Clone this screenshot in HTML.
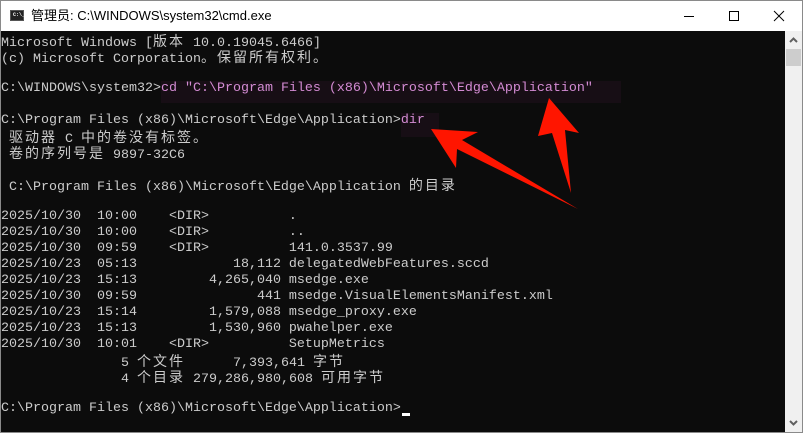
<!DOCTYPE html>
<html><head><meta charset="utf-8"><style>
html,body{margin:0;padding:0;width:803px;height:433px;overflow:hidden;background:#fff}
#win{position:absolute;left:0;top:0;width:801px;height:431px;border:1px solid #8a8a8a;background:#fff}
#title{position:absolute;left:0;top:0;width:801px;height:30px;background:#fff}
#title .t{position:absolute;left:30px;top:6px;font:13px "Liberation Sans","Noto Sans CJK SC",sans-serif;color:#000;line-height:18px}
#icon{position:absolute;left:9px;top:9px;width:14px;height:11px;background:#222;border:1px solid #555;box-sizing:border-box}
#icon span{position:absolute;left:2px;top:1px;font:bold 5px "Liberation Mono",monospace;color:#fff}
#term{position:absolute;left:0;top:30px;width:784px;height:401px;background:#0c0c0c;overflow:hidden}
#sb{position:absolute;left:784px;top:30px;width:17px;height:401px;background:#f0f0f0}
.ln{position:absolute;left:0;height:16px;line-height:16px;white-space:pre;font:13.33px "Liberation Mono",monospace;color:#cccccc}
.c{font-family:"Noto Sans CJK SC",sans-serif;font-size:14px;letter-spacing:2px;line-height:0}
.p{color:#d38bd3}
.hl{position:absolute;background:#170e15}
</style></head><body>
<div id="win">
<div id="title"><div id="icon"><span>C:\_</span></div><div class="t"><span style="font-family:'Noto Sans CJK SC',sans-serif;line-height:0">管理员</span>: C:\WINDOWS\system32\cmd.exe</div>
<svg style="position:absolute;left:680px;top:8px" width="120" height="16">
<line x1="3" y1="7.5" x2="13" y2="7.5" stroke="#000" stroke-width="1"/>
<rect x="48.5" y="2.5" width="9" height="9" fill="none" stroke="#000"/>
<line x1="93" y1="2" x2="103" y2="12" stroke="#000"/><line x1="103" y1="2" x2="93" y2="12" stroke="#000"/>
</svg></div>
<div id="term">
<div class="hl" style="left:160px;top:50px;width:460px;height:22px"></div>
<div class="hl" style="left:400px;top:82px;width:38px;height:24px"></div>
<div class="ln" style="top:5px">Microsoft Windows [<span class="c">版本</span> 10.0.19045.6466]</div>
<div class="ln" style="top:21px">(c) Microsoft Corporation<span class="c">。保留所有权利。</span></div>
<div class="ln" style="top:50px">C:\WINDOWS\system32&gt;<span class="p">cd ″C:\Program Files (x86)\Microsoft\Edge\Application″</span></div>
<div class="ln" style="top:82px">C:\Program Files (x86)\Microsoft\Edge\Application&gt;<span class="p">dir</span></div>
<div class="ln" style="top:101px"> <span class="c">驱动器</span> C <span class="c">中的卷没有标签。</span></div>
<div class="ln" style="top:117px"> <span class="c">卷的序列号是</span> 9897-32C6</div>
<div class="ln" style="top:149px"> C:\Program Files (x86)\Microsoft\Edge\Application <span class="c">的目录</span></div>
<div class="ln" style="top:178px">2025/10/30  10:00    &lt;DIR&gt;          .</div>
<div class="ln" style="top:194px">2025/10/30  10:00    &lt;DIR&gt;          ..</div>
<div class="ln" style="top:210px">2025/10/30  09:59    &lt;DIR&gt;          141.0.3537.99</div>
<div class="ln" style="top:226px">2025/10/23  05:13            18,112 delegatedWebFeatures.sccd</div>
<div class="ln" style="top:242px">2025/10/23  15:13         4,265,040 msedge.exe</div>
<div class="ln" style="top:258px">2025/10/30  09:59               441 msedge.VisualElementsManifest.xml</div>
<div class="ln" style="top:274px">2025/10/23  15:14         1,579,088 msedge_proxy.exe</div>
<div class="ln" style="top:290px">2025/10/23  15:13         1,530,960 pwahelper.exe</div>
<div class="ln" style="top:306px">2025/10/30  10:01    &lt;DIR&gt;          SetupMetrics</div>
<div class="ln" style="top:325px">               5 <span class="c">个文件</span>      7,393,641 <span class="c">字节</span></div>
<div class="ln" style="top:341px">               4 <span class="c">个目录</span> 279,286,980,608 <span class="c">可用字节</span></div>
<div class="ln" style="top:370px">C:\Program Files (x86)\Microsoft\Edge\Application&gt;</div>
<div style="position:absolute;left:401px;top:382px;width:8px;height:3px;background:#fff"></div>
<svg style="position:absolute;left:0;top:-30px" width="784" height="433">
<polygon points="430,128 477,131 461,139 577,208 456,148 455,167" fill="#ff1500"/>
<polygon points="548,97 578,132 564,129 570,192 551,132 537,135" fill="#ff1500"/>
</svg>
</div>
<div id="sb">
<svg width="17" height="401"><polyline points="5,11 8.5,7.5 12,11" fill="none" stroke="#606060" stroke-width="2"/>
<rect x="1" y="18" width="15" height="17" fill="#cdcdcd"/>
<polyline points="5,390 8.5,393.5 12,390" fill="none" stroke="#606060" stroke-width="2"/></svg>
</div>
</div>
</body></html>
